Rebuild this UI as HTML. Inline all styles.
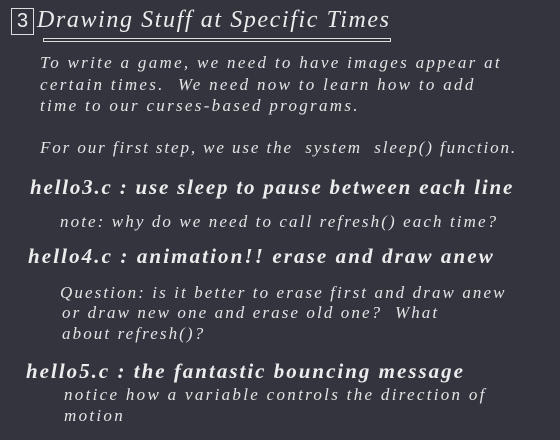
<!DOCTYPE html>
<html><head><meta charset="utf-8"><style>
html,body{margin:0;padding:0}
body{width:560px;height:440px;background:#33343e;position:relative;overflow:hidden;color:#ececec;font-family:"Liberation Serif",serif;font-style:italic}
.t{position:absolute;white-space:nowrap;line-height:1}
.p{font-size:17px;letter-spacing:2.3px;color:#e4e4e4}
.h{font-size:21px;letter-spacing:2px;font-weight:bold}
.box{position:absolute;left:11px;top:8px;width:21px;height:25px;border:1px solid #ddd;font-style:normal;font-family:"Liberation Sans",sans-serif;font-size:20px;text-align:center;line-height:25px;color:#eee}
.ul{position:absolute;left:43px;top:38px;width:346px;height:2px;border:1px solid #ddd}
</style></head><body>
<div class="box">3</div>
<div class="t" style="left:37px;top:8px;font-size:24px;letter-spacing:1.6px">Drawing Stuff at Specific Times</div>
<div class="ul"></div>
<div class="t p" style="left:40px;top:54px">To write a game, we need to have images appear at</div>
<div class="t p" style="left:40px;top:76px">certain times.&nbsp; We need now to learn how to add</div>
<div class="t p" style="left:40px;top:97px">time to our curses-based programs.</div>
<div class="t p" style="left:40px;top:139px;letter-spacing:1.9px">For our first step, we use the&nbsp; system&nbsp; sleep() function.</div>
<div class="t h" style="left:30px;top:177px;letter-spacing:1.8px">hello3.c : use sleep to pause between each line</div>
<div class="t p" style="left:60px;top:213px;letter-spacing:2.1px">note: why do we need to call refresh() each time?</div>
<div class="t h" style="left:28px;top:246px;letter-spacing:2.1px">hello4.c : animation!! erase and draw anew</div>
<div class="t p" style="left:60px;top:284px;letter-spacing:2.1px">Question: is it better to erase first and draw anew</div>
<div class="t p" style="left:62px;top:304px;letter-spacing:2.1px">or draw new one and erase old one?&nbsp; What</div>
<div class="t p" style="left:62px;top:325px;letter-spacing:2.1px">about refresh()?</div>
<div class="t h" style="left:26px;top:361px;letter-spacing:2px">hello5.c : the fantastic bouncing message</div>
<div class="t p" style="left:64px;top:386px">notice how a variable controls the direction of</div>
<div class="t p" style="left:64px;top:407px">motion</div>
</body></html>
